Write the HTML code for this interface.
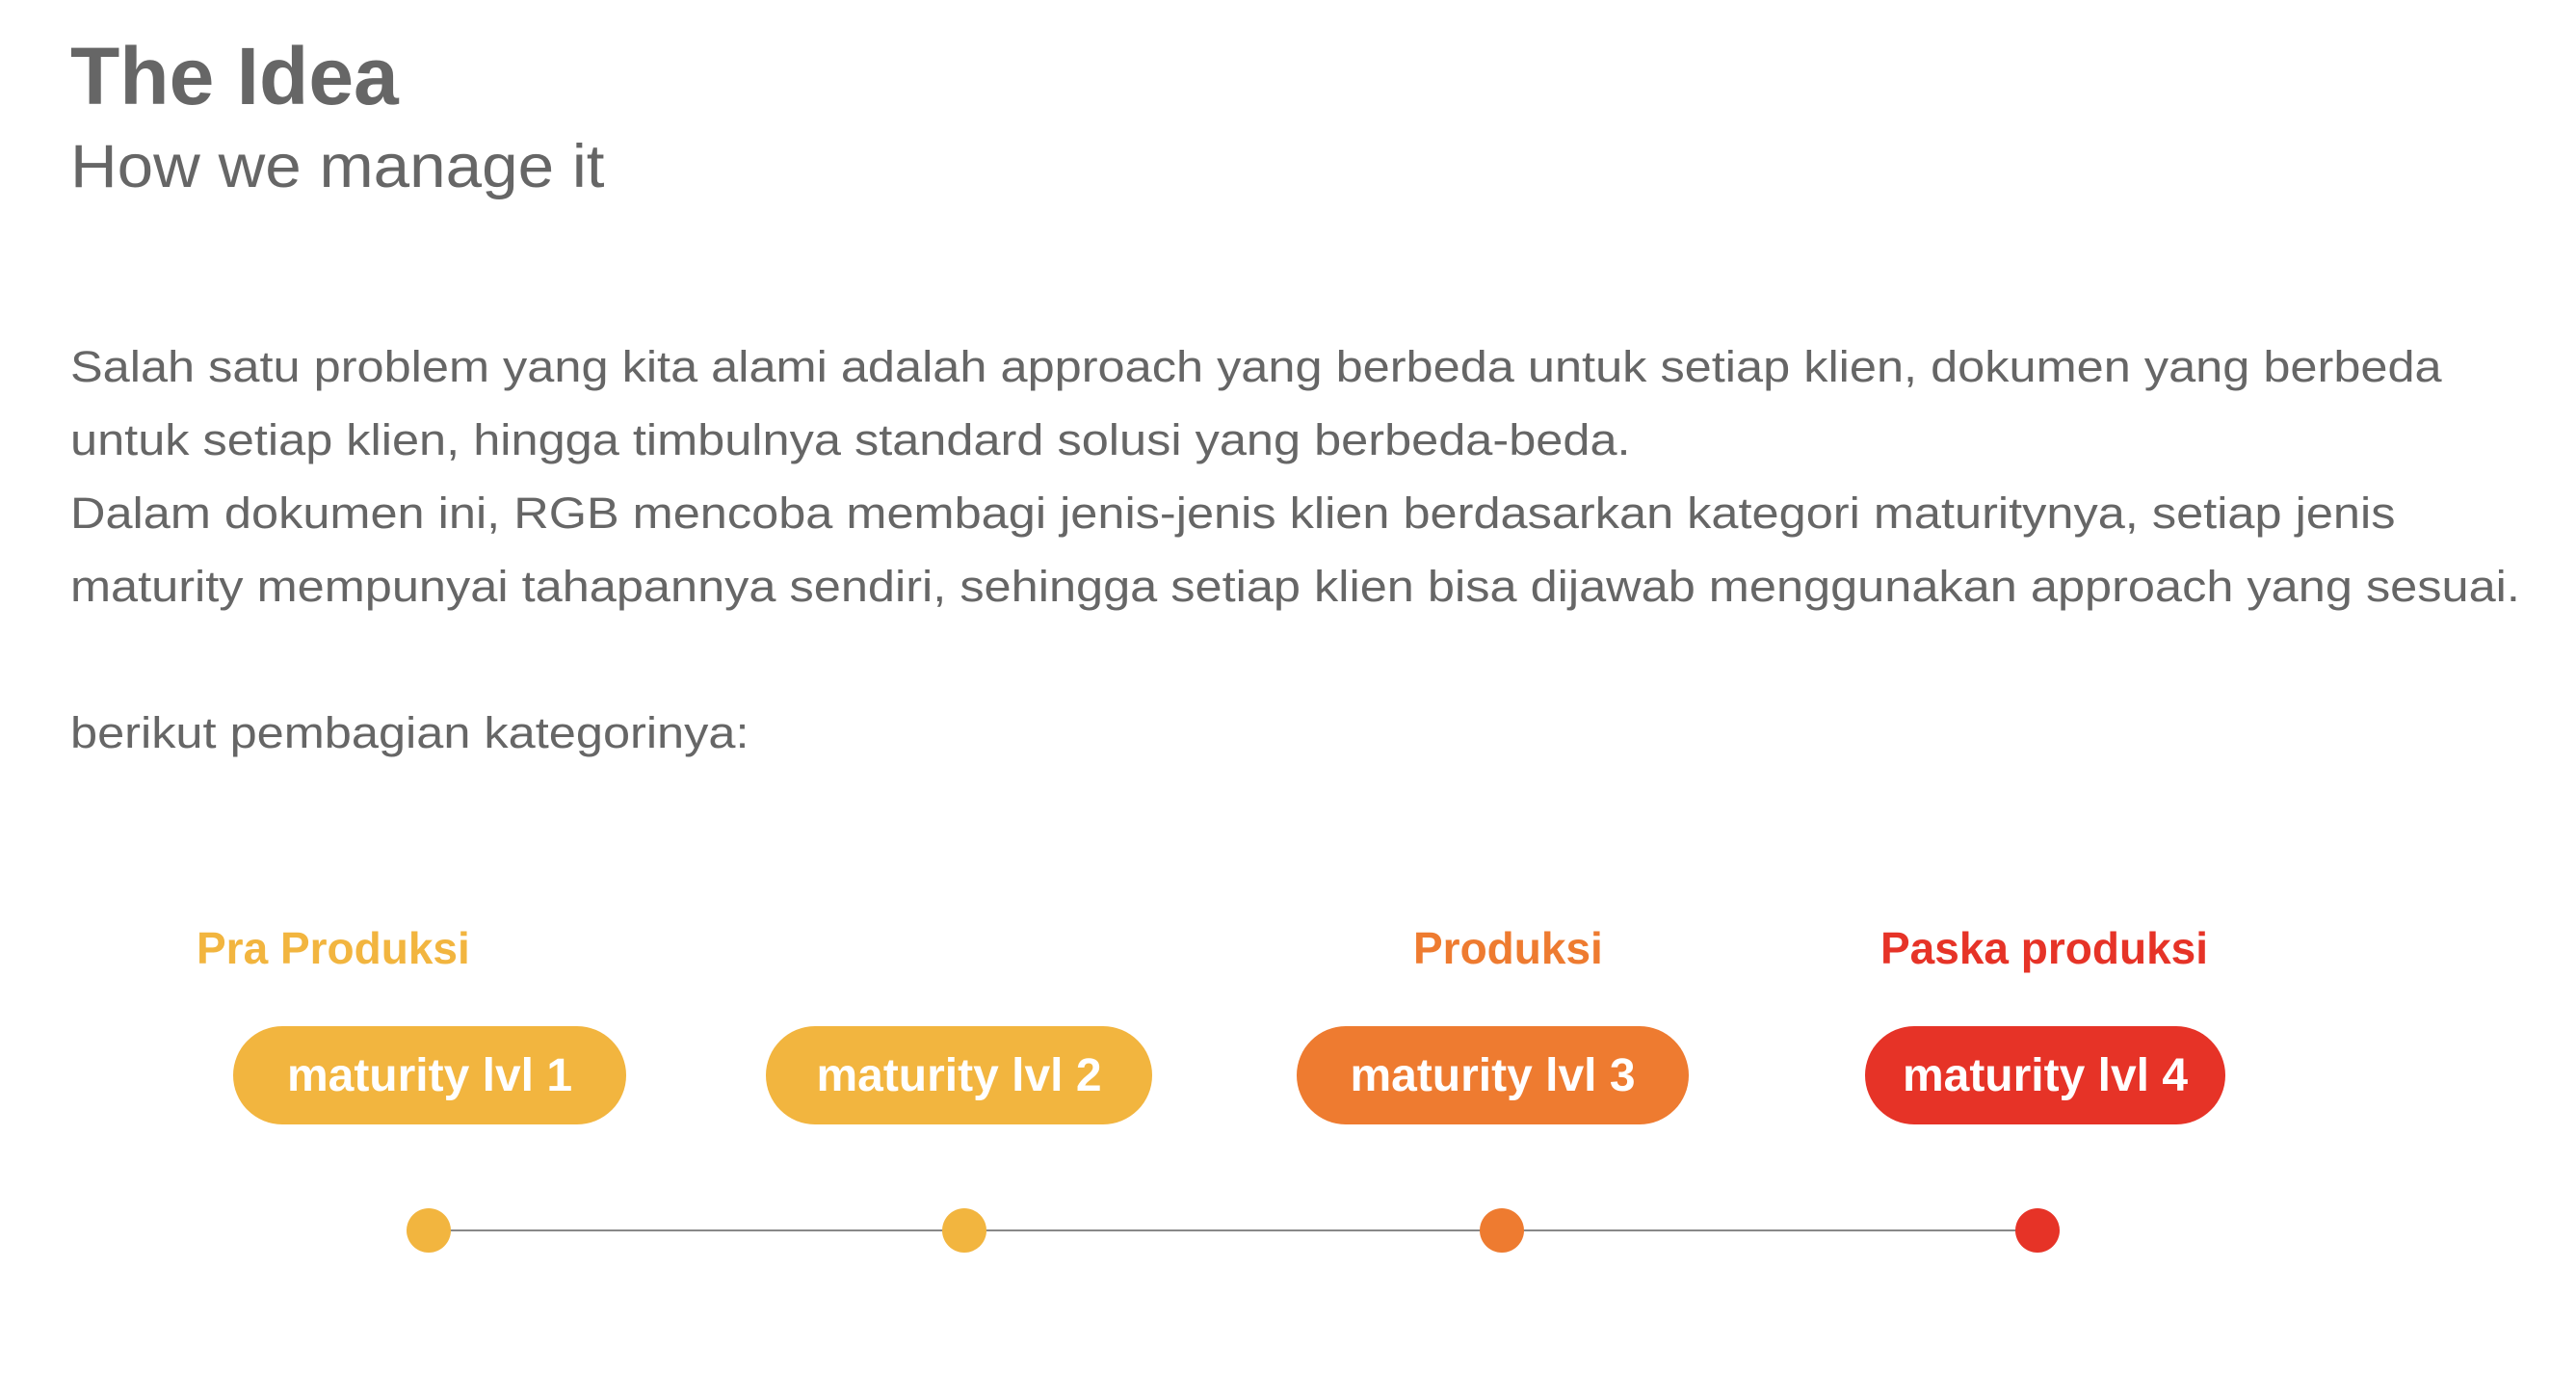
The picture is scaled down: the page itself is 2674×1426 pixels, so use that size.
<!DOCTYPE html>
<html><head><meta charset="utf-8"><style>
html,body{margin:0;padding:0;background:#fff;}
body{width:2674px;height:1426px;position:relative;overflow:hidden;font-family:"Liberation Sans",Arial,sans-serif;color:#666;}
.a{position:absolute;white-space:nowrap;line-height:1;}
.t{left:73px;top:37px;font-size:84px;font-weight:bold;}
.s{left:73px;top:142px;font-size:63px;transform:scaleX(1.07);transform-origin:0 0;}
.b{position:absolute;left:73px;top:343px;font-size:45px;line-height:76px;white-space:nowrap;transform:scaleX(1.122);transform-origin:0 0;}
.l{font-size:46px;font-weight:bold;top:961px;}
.p{position:absolute;top:1065px;height:102px;border-radius:51px;color:#fff;font-weight:bold;font-size:48px;display:flex;align-items:center;justify-content:center;}
.d{position:absolute;top:1254px;width:46px;height:46px;border-radius:50%;}
.y{background:#F2B53F}.o{background:#EE7B30}.r{background:#E63327}
</style></head><body>
<div class="a t">The Idea</div>
<div class="a s">How we manage it</div>
<div class="b">Salah satu problem yang kita alami adalah approach yang berbeda untuk setiap klien, dokumen yang berbeda<br>untuk setiap klien, hingga timbulnya standard solusi yang berbeda-beda.<br>Dalam dokumen ini, RGB mencoba membagi jenis-jenis klien berdasarkan kategori maturitynya, setiap jenis<br>maturity mempunyai tahapannya sendiri, sehingga setiap klien bisa dijawab menggunakan approach yang sesuai.<br><br>berikut pembagian kategorinya:</div>
<div class="a l" style="left:204px;color:#F2B53F">Pra Produksi</div>
<div class="a l" style="left:1467px;color:#EE7B30">Produksi</div>
<div class="a l" style="left:1952px;color:#E63327">Paska produksi</div>
<div class="p y" style="left:242px;width:408px">maturity lvl 1</div>
<div class="p y" style="left:795px;width:401px">maturity lvl 2</div>
<div class="p o" style="left:1346px;width:407px">maturity lvl 3</div>
<div class="p r" style="left:1936px;width:374px">maturity lvl 4</div>
<div style="position:absolute;left:445px;top:1276px;width:1670px;height:2px;background:#888"></div>
<div class="d y" style="left:422px"></div>
<div class="d y" style="left:978px"></div>
<div class="d o" style="left:1536px"></div>
<div class="d r" style="left:2092px"></div>
</body></html>
